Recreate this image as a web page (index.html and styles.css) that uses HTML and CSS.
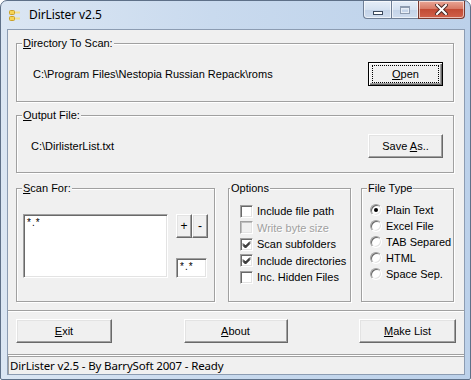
FILE: index.html
```html
<!DOCTYPE html>
<html>
<head>
<meta charset="utf-8">
<title>DirLister v2.5</title>
<link rel="stylesheet" href="styles.css">
</head>
<body>
<div class="window">
  <div class="titlebar">
    <svg class="app-icon" width="11" height="12" viewBox="0 0 11 12">
      <rect x="0.5" y="0.5" width="5" height="4" rx="1" fill="#f6d455" stroke="#c9a02a"/>
      <rect x="0.5" y="6.5" width="5" height="4" rx="1" fill="#f6d455" stroke="#c9a02a"/>
      <rect x="6" y="1.5" width="5" height="2" fill="#f3e08a"/>
      <rect x="6" y="7.5" width="5" height="2" fill="#f3e08a"/>
    </svg>
    <span class="title">DirLister v2.5</span>
    <div class="caption">
      <div class="cap-btn cap-min"><span class="min-glyph"></span></div>
      <div class="cap-btn cap-max"><span class="max-glyph"></span></div>
      <div class="cap-btn cap-close">
        <svg width="13" height="11" viewBox="0 0 13 11">
          <path d="M2 1 L11 10 M11 1 L2 10" stroke="#4a2a26" stroke-width="4" stroke-linecap="square"/>
          <path d="M2 1 L11 10 M11 1 L2 10" stroke="#ffffff" stroke-width="2" stroke-linecap="square"/>
        </svg>
      </div>
    </div>
  </div>

  <div class="client">
    <div class="group group-dir">
      <span class="group-label lbl-dir"><u>D</u>irectory To Scan:</span>
      <div class="line-row pad-dir">
        <span class="path">C:\Program Files\Nestopia Russian Repack\roms</span>
        <button class="btn btn-default btn-wide"><span class="focus"><span><u>O</u>pen</span></span></button>
      </div>
    </div>

    <div class="group group-out">
      <span class="group-label lbl-dir"><u>O</u>utput File:</span>
      <div class="line-row pad-out">
        <span class="path">C:\DirlisterList.txt</span>
        <button class="btn btn-wide"><span>Save <u>A</u>s..</span></button>
      </div>
    </div>

    <div class="groups-row">
      <div class="group group-scan">
        <span class="group-label lbl-scan"><u>S</u>can For:</span>
        <div class="scan-body">
          <div class="listbox"><span class="mask">*.*</span></div>
          <div class="scan-side">
            <div class="pm">
              <button class="btn btn-small">+</button>
              <button class="btn btn-small">-</button>
            </div>
            <div class="textbox"><span class="mask">*.*</span></div>
          </div>
        </div>
      </div>

      <div class="group group-opt">
        <span class="group-label lbl-opt">Options</span>
        <div class="opt-list">
          <div class="opt"><span class="check"></span><span>Include file path</span></div>
          <div class="opt disabled"><span class="check"></span><span>Write byte size</span></div>
          <div class="opt"><span class="check checked"><svg width="9" height="9" viewBox="0 0 9 9"><path d="M1 3.5 L3.5 6 L8 1.5 M1 4.5 L3.5 7 L8 2.5 M1 5.5 L3.5 8 L8 3.5" stroke="#000" stroke-width="1" fill="none"/></svg></span><span>Scan subfolders</span></div>
          <div class="opt"><span class="check checked"><svg width="9" height="9" viewBox="0 0 9 9"><path d="M1 3.5 L3.5 6 L8 1.5 M1 4.5 L3.5 7 L8 2.5 M1 5.5 L3.5 8 L8 3.5" stroke="#000" stroke-width="1" fill="none"/></svg></span><span>Include directories</span></div>
          <div class="opt"><span class="check"></span><span>Inc. Hidden Files</span></div>
        </div>
      </div>

      <div class="group group-type">
        <span class="group-label lbl-type">File Type</span>
        <div class="radio-list">
          <div class="opt"><span class="radio on"></span><span>Plain Text</span></div>
          <div class="opt"><span class="radio"></span><span>Excel File</span></div>
          <div class="opt"><span class="radio"></span><span>TAB Separed</span></div>
          <div class="opt"><span class="radio"></span><span>HTML</span></div>
          <div class="opt"><span class="radio"></span><span>Space Sep.</span></div>
        </div>
      </div>
    </div>

    <div class="action-panel">
      <button class="btn btn-exit"><span><u>E</u>xit</span></button>
      <button class="btn btn-about"><span><u>A</u>bout</span></button>
      <button class="btn btn-make"><span><u>M</u>ake List</span></button>
    </div>

    <div class="statusbar">DirLister v2.5 - By BarrySoft 2007 - Ready</div>
  </div>
</div>
</body>
</html>
```

FILE: styles.css
```css
* { box-sizing: border-box; }
html, body { margin: 0; padding: 0; background: #ffffff; }
body { width: 471px; height: 380px; overflow: hidden; }

.window {
  width: 471px;
  height: 380px;
  border: 1px solid #5e7088;
  border-radius: 7px 7px 2px 2px;
  background: linear-gradient(to right, #dbe6f3 0%, #c9daee 45%, #bcd1ea 100%);
  display: flex;
  flex-direction: column;
}

.titlebar {
  height: 28px;
  display: flex;
  align-items: flex-start;
  padding-left: 8px;
  font-family: "Noto Sans", "Open Sans", sans-serif;
  font-size: 12px;
  color: #000;
}
.app-icon { margin-top: 9px; flex: none; }
.title { margin-left: 9px; margin-top: 6px; line-height: 16px; letter-spacing: -0.1px; }

.caption {
  margin-left: auto;
  margin-right: 5px;
  display: flex;
  height: 18px;
}
.cap-btn {
  height: 18px;
  border: 1px solid #6f7f96;
  border-top: none;
  display: flex;
  align-items: center;
  justify-content: center;
  box-shadow: inset 0 0 0 1px rgba(255,255,255,0.6);
}
.cap-min {
  width: 28px;
  border-radius: 0 0 0 4px;
  border-right: none;
  background: linear-gradient(#e6eef8 0%, #d6e2f1 50%, #c3d3e8 51%, #cfdcee 100%);
}
.cap-max {
  width: 27px;
  border-right: none;
  background: linear-gradient(#e6eef8 0%, #d6e2f1 50%, #c3d3e8 51%, #cfdcee 100%);
}
.cap-close {
  width: 47px;
  border-color: #7a3a30;
  border-radius: 0 0 4px 0;
  background: linear-gradient(#e9a797 0%, #d77a66 45%, #c24b35 50%, #d0604a 100%);
}
.min-glyph {
  width: 10px; height: 4px;
  margin-top: 6px;
  background: #fff;
  border: 1px solid #3c4a5e;
}
.max-glyph {
  width: 10px; height: 8px;
  border: 1px solid #8e9cb0;
  border-top-width: 2px;
  background: transparent;
  box-shadow: inset 0 0 0 1px #e8eef6;
}

.client {
  margin: 0 5px 4px 6px;
  flex: 1;
  border: 1px solid #8c9cb2;
  background: #f0f0f0;
  display: flex;
  flex-direction: column;
  font-family: "Liberation Sans", Arial, sans-serif;
  font-size: 11px;
  color: #000;
}

.group {
  position: relative;
  border: 1px solid #a0a0a0;
  box-shadow: inset 1px 1px 0 #ffffff, 1px 1px 0 #ffffff;
}
.group-label {
  position: absolute;
  top: -8px;
  background: #f0f0f0;
  padding: 0 1px;
  line-height: 14px;
  white-space: nowrap;
}
.lbl-dir { left: 5px; }
.lbl-scan { left: 5px; }
.lbl-opt { left: 1px; }
.lbl-type { left: 5px; }

.group-dir { margin: 13px 0 0 8px; width: 438px; height: 59px; }
.group-out { margin: 13px 0 0 8px; width: 438px; height: 58px; }

.line-row {
  display: flex;
  align-items: center;
  justify-content: space-between;
  padding-top: 18px;
  padding-right: 10px;
}
.pad-dir { padding-left: 16px; }
.pad-out { padding-left: 14px; }
.path { white-space: nowrap; }

.btn {
  font-family: "Liberation Sans", Arial, sans-serif;
  font-size: 11px;
  color: #000;
  background: #f0f0f0;
  border: 1px solid;
  border-color: #ffffff #696969 #696969 #ffffff;
  box-shadow: inset -1px -1px 0 #a0a0a0, inset 1px 1px 0 #e3e3e3;
  padding: 0;
  margin: 0;
  height: 24px;
  display: flex;
  align-items: center;
  justify-content: center;
  white-space: nowrap;
}
.btn-wide { width: 75px; }
.btn-default {
  border: 1px solid #000;
  box-shadow: inset 1px 1px 0 #ffffff, inset -1px -1px 0 #696969, inset -2px -2px 0 #a0a0a0;
}
.focus {
  display: flex;
  align-items: center;
  justify-content: center;
  width: 65px;
  height: 16px;
  outline: 1px dotted #000;
}

.groups-row {
  display: flex;
  margin: 15px 0 0 8px;
  height: 114px;
}
.group-scan { width: 199px; height: 114px; }
.group-opt { width: 123px; height: 114px; margin-left: 13px; }
.group-type { width: 93px; height: 114px; margin-left: 10px; }

.scan-body {
  display: flex;
  padding: 25px 0 0 6px;
}
.listbox {
  width: 145px;
  height: 64px;
  background: #ffffff;
  border: 1px solid;
  border-color: #a0a0a0 #ffffff #ffffff #a0a0a0;
  box-shadow: inset 1px 1px 0 #696969, inset -1px -1px 0 #e3e3e3;
  padding: 1px 0 0 3px;
}
.mask { font-size: 10px; line-height: 12px; letter-spacing: 1px; }
.scan-side {
  margin-left: 8px;
  display: flex;
  flex-direction: column;
}
.pm { display: flex; }
.btn-small { width: 16px; height: 24px; font-size: 12px; }
.textbox {
  margin-top: 20px;
  width: 31px;
  height: 20px;
  background: #ffffff;
  border: 1px solid;
  border-color: #a0a0a0 #ffffff #ffffff #a0a0a0;
  box-shadow: inset 1px 1px 0 #696969, inset -1px -1px 0 #e3e3e3;
  padding: 1px 0 0 3px;
}

.opt-list, .radio-list {
  display: flex;
  flex-direction: column;
}
.opt-list { padding: 14px 0 0 11px; }
.radio-list { padding: 13px 0 0 8px; }
.opt {
  display: flex;
  align-items: center;
  height: 16.5px;
  white-space: nowrap;
}
.opt-list .opt span:last-child { margin-left: 4px; }
.radio-list .opt span:last-child { margin-left: 4px; }
.radio-list .opt { height: 16px; }

.check {
  width: 13px;
  height: 13px;
  background: #ffffff;
  border: 1px solid;
  border-color: #a0a0a0 #ffffff #ffffff #a0a0a0;
  box-shadow: inset 1px 1px 0 #696969, inset -1px -1px 0 #e3e3e3;
  display: flex;
  align-items: center;
  justify-content: center;
  flex: none;
}
.disabled .check { background: #f0f0f0; box-shadow: inset 1px 1px 0 #c0c0c0, inset -1px -1px 0 #e3e3e3; }
.disabled span:last-child { color: #a0a0a0; text-shadow: 1px 1px 0 #ffffff; }

.radio {
  width: 12px;
  height: 12px;
  border-radius: 50%;
  background: #ffffff;
  border: 1px solid;
  border-color: #a0a0a0 #ffffff #ffffff #a0a0a0;
  box-shadow: inset 1px 1px 0 #696969, inset -1px -1px 0 #e3e3e3;
  display: flex;
  align-items: center;
  justify-content: center;
  flex: none;
}
.radio.on::after {
  content: "";
  width: 4px;
  height: 4px;
  border-radius: 50%;
  background: #000;
}

.action-panel {
  margin-top: 8px;
  height: 45px;
  border-top: 1px solid #a0a0a0;
  border-bottom: 1px solid #a0a0a0;
  box-shadow: inset 0 1px 0 #ffffff, 0 1px 0 #ffffff;
  display: flex;
  align-items: flex-start;
  justify-content: space-between;
  padding: 8px 8px 0 8px;
}
.btn-exit { width: 96px; }
.btn-about { width: 104px; }
.btn-make { width: 97px; }

.statusbar {
  margin-top: 1px;
  height: 18px;
  border-top: 1px solid #a0a0a0;
  border-left: 1px solid #a0a0a0;
  padding-left: 1px;
  font-family: "Noto Sans", "Open Sans", sans-serif;
  font-size: 11.5px;
  line-height: 17px;
  letter-spacing: -0.15px;
  white-space: nowrap;
}
```
